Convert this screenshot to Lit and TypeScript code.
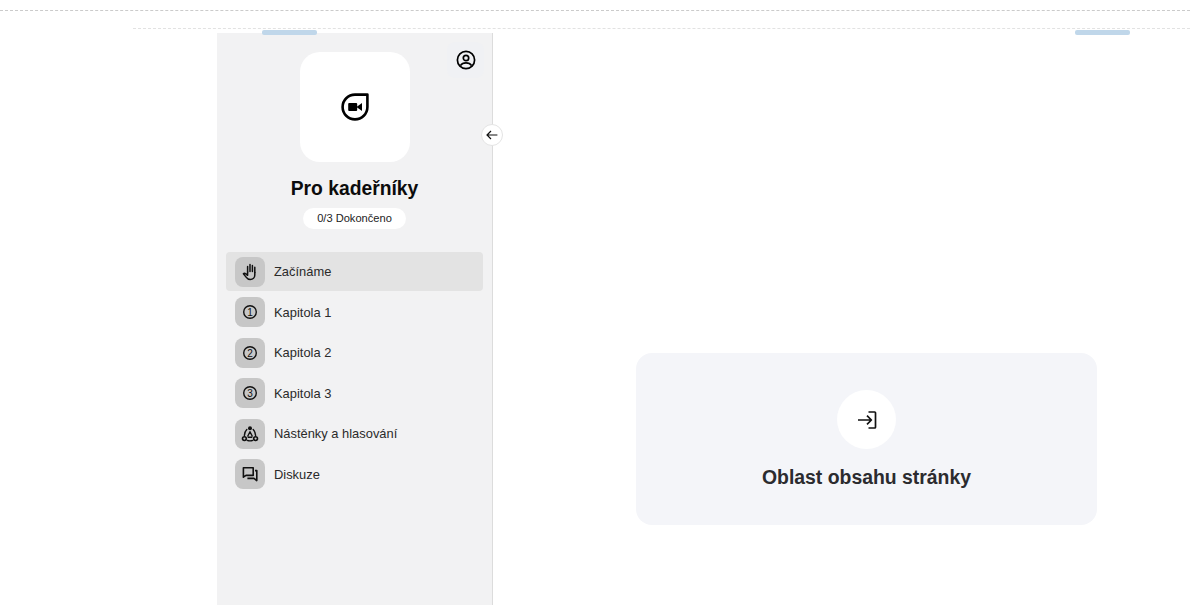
import { LitElement, html, css, svg } from 'lit';
import { customElement } from 'lit/decorators.js';

const numberIcon = (n: string) => html`
  <svg width="16" height="16" viewBox="0 0 16 16" fill="none">
    <circle cx="8" cy="8" r="6.3" stroke="#111" stroke-width="1.4"></circle>
    <text x="8" y="11.6" text-anchor="middle" class="digit">${n}</text>
  </svg>
`;

const handIcon = html`
  <svg width="18" height="18" viewBox="0 0 18 18" fill="none" stroke="#111" stroke-width="1.5" stroke-linecap="round" stroke-linejoin="round">
    <path d="M6.6 9V3.4M9 8.4V1.6M11.4 8.4V2.4M13.8 9.6V4.2"></path>
    <path d="M13.8 9.6v2.4c0 2.7-2 4.5-4.5 4.5-2 0-3.2-.9-4.2-2.4L2.4 10.8c.6-.7 1.6-.7 2.2-.1l2 1.6V9"></path>
  </svg>
`;

const boardsIcon = html`
  <svg width="18" height="18" viewBox="0 0 18 18" fill="none" stroke="#111" stroke-width="1.4" stroke-linecap="round" stroke-linejoin="round">
    <circle cx="9" cy="3.2" r="2" fill="#111" stroke="none"></circle>
    <circle cx="3.4" cy="13.6" r="1.9" stroke-width="1.6"></circle>
    <circle cx="14.6" cy="13.6" r="1.9" stroke-width="1.6"></circle>
    <path d="M5.8 4.6C4.2 6.2 3.5 8 3.4 10.4M12.2 4.6c1.6 1.6 2.3 3.4 2.4 5.8M6.2 15.4c1.9.7 3.7.7 5.6 0"></path>
    <path d="M9 6.8 6.8 11M9 6.8 11.2 11M7.2 12.2h3.6"></path>
  </svg>
`;

const chatIcon = html`
  <svg width="16" height="16" viewBox="0 0 16 16" fill="none" stroke="#111" stroke-width="1.6" stroke-linejoin="round">
    <path d="M1.4 1.8h9.8v7.6H4l-2.6 1.8z"></path>
    <path d="M13 4.6h1.8v10l-2.8-2.2H5.4"></path>
  </svg>
`;

interface NavItem {
  label: string;
  icon: unknown;
  active?: boolean;
}

const NAV_ITEMS: NavItem[] = [
  { label: 'Začínáme', icon: handIcon, active: true },
  { label: 'Kapitola 1', icon: numberIcon('1') },
  { label: 'Kapitola 2', icon: numberIcon('2') },
  { label: 'Kapitola 3', icon: numberIcon('3') },
  { label: 'Nástěnky a hlasování', icon: boardsIcon },
  { label: 'Diskuze', icon: chatIcon },
];

const logoShape = svg`
  <path d="M14 1.6H26.4V14A12.4 12.4 0 1 1 14 1.6Z" stroke="#000" stroke-width="2.6" fill="none" stroke-linejoin="round"></path>
  <rect x="7.2" y="10" width="9" height="8" rx="1" fill="#000"></rect>
  <path d="M15.5 14 21 10V18Z" fill="#000"></path>
`;

@customElement('app-root')
export class AppRoot extends LitElement {
  static styles = css`
    :host {
      display: block;
      position: relative;
      height: 605px;
      overflow: hidden;
      background: #fff;
      font-family: 'Liberation Sans', Arial, sans-serif;
      color: #2a2a2a;
    }

    .rule-top {
      margin-top: 10px;
      border-top: 1px dashed #cbcbcb;
    }
    .rule-inner {
      margin: 17px 0 0 133px;
      border-top: 1px dashed #e2e2e2;
    }

    .handle {
      position: absolute;
      z-index: 2;
      top: 30px;
      width: 55px;
      height: 5px;
      border-radius: 2px;
      background: #c0d7ea;
    }
    .handle-left {
      left: 262px;
    }
    .handle-right {
      left: 1075px;
    }

    .layout {
      display: flex;
      margin: 4px 0 0 217px;
      height: 572px;
    }

    /* sidebar */
    .sidebar {
      position: relative;
      box-sizing: border-box;
      flex: none;
      width: 276px;
      padding: 19px 9px 0;
      background: #f2f2f3;
      border-right: 1px solid #dcdcdc;
      display: flex;
      flex-direction: column;
      align-items: center;
    }
    .logo {
      width: 110px;
      height: 110px;
      border-radius: 20px;
      background: #fff;
      display: flex;
      align-items: center;
      justify-content: center;
    }
    .profile {
      position: absolute;
      top: 9px;
      left: 230px;
      width: 37px;
      height: 36px;
      border-radius: 8px;
      background: #f0f1f4;
      display: flex;
      align-items: center;
      justify-content: center;
    }
    .collapse {
      position: absolute;
      top: 91px;
      left: 264px;
      box-sizing: border-box;
      width: 22px;
      height: 22px;
      border-radius: 50%;
      background: #fff;
      border: 1px solid #e4e4e4;
      display: flex;
      align-items: center;
      justify-content: center;
    }
    .title {
      margin: 15px 0 0;
      font-size: 19.3px;
      line-height: 23px;
      font-weight: 700;
      color: #0c0c0c;
    }
    .progress {
      margin-top: 8px;
      height: 21px;
      padding: 0 14px;
      border-radius: 11px;
      background: #fff;
      font-size: 11.1px;
      line-height: 21px;
      color: #222;
    }
    .nav {
      align-self: stretch;
      margin-top: 23px;
      display: flex;
      flex-direction: column;
      gap: 1.5px;
    }
    .nav-item {
      display: flex;
      align-items: center;
      gap: 9px;
      height: 39px;
      padding: 0 9px;
      border-radius: 4px;
      font-size: 12.9px;
      color: #2a2a2a;
    }
    .nav-item.active {
      background: #e3e3e3;
    }
    .nav-icon {
      flex: none;
      width: 30px;
      height: 30px;
      border-radius: 8px;
      background: #c7c7c7;
      display: flex;
      align-items: center;
      justify-content: center;
    }
    .digit {
      font-size: 10px;
      fill: #111;
    }

    /* content placeholder */
    .main {
      flex: 1;
      padding: 320px 0 0 143px;
    }
    .placeholder {
      box-sizing: border-box;
      width: 461px;
      height: 172px;
      padding-top: 37px;
      border-radius: 16px;
      background: #f4f5f9;
      display: flex;
      flex-direction: column;
      align-items: center;
    }
    .placeholder-icon {
      width: 59px;
      height: 59px;
      border-radius: 50%;
      background: #fff;
      display: flex;
      align-items: center;
      justify-content: center;
    }
    .placeholder-title {
      margin: 17px 0 0;
      font-size: 19.4px;
      line-height: 23px;
      font-weight: 700;
      color: #2b2b2f;
    }
  `;

  render() {
    return html`
      <div class="rule-top"></div>
      <div class="rule-inner"></div>
      <div class="handle handle-left"></div>
      <div class="handle handle-right"></div>

      <div class="layout">
        <aside class="sidebar">
          <div class="logo">
            <svg width="28" height="28" viewBox="0 0 28 28">${logoShape}</svg>
          </div>
          <div class="profile">
            <svg width="20" height="20" viewBox="0 0 20 20" fill="none" stroke="#000" stroke-width="1.7">
              <circle cx="10" cy="10" r="8.6"></circle>
              <circle cx="10" cy="8" r="2.7"></circle>
              <path d="M4.4 15.6c1.2-1.8 3.2-2.7 5.6-2.7s4.4.9 5.6 2.7"></path>
            </svg>
          </div>
          <div class="collapse">
            <svg width="12" height="12" viewBox="0 0 12 12" fill="none" stroke="#111" stroke-width="1.2">
              <path d="M11.4 6H1M5 2 1 6l4 4"></path>
            </svg>
          </div>

          <h1 class="title">Pro kadeřníky</h1>
          <div class="progress">0/3 Dokončeno</div>

          <nav class="nav">
            ${NAV_ITEMS.map(
              (item) => html`
                <div class="nav-item ${item.active ? 'active' : ''}">
                  <span class="nav-icon">${item.icon}</span>
                  <span>${item.label}</span>
                </div>
              `
            )}
          </nav>
        </aside>

        <main class="main">
          <section class="placeholder">
            <div class="placeholder-icon">
              <svg width="20" height="20" viewBox="0 0 20 20" fill="none" stroke="#111" stroke-width="1.7" stroke-linejoin="round">
                <path d="M1 10h13M10 5.6l4.4 4.4-4.4 4.4"></path>
                <path d="M11.5 2h6.2a.8.8 0 0 1 .8.8v14.4a.8.8 0 0 1-.8.8h-6.2"></path>
              </svg>
            </div>
            <h2 class="placeholder-title">Oblast obsahu stránky</h2>
          </section>
        </main>
      </div>
    `;
  }
}
